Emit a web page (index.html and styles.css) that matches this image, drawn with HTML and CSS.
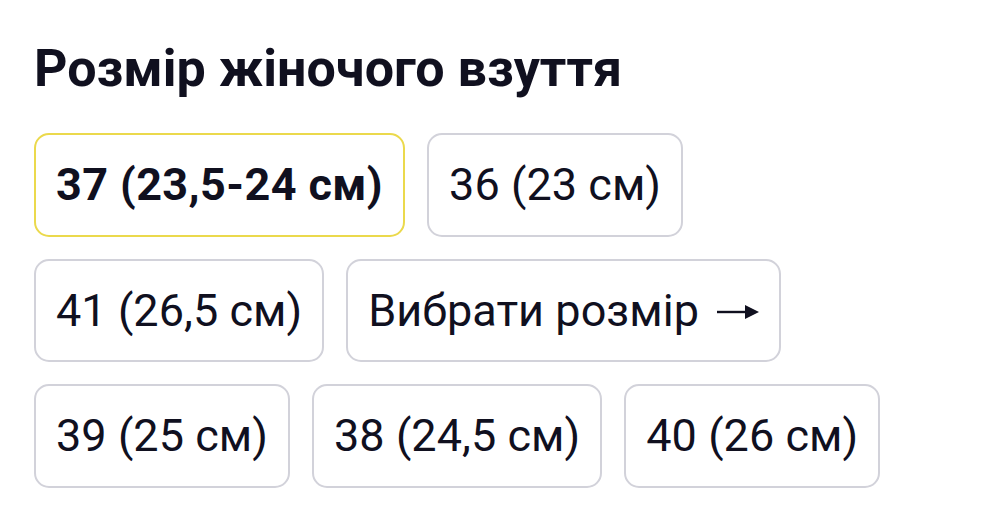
FILE: index.html
```html
<!DOCTYPE html>
<html lang="uk">
<head>
  <meta charset="UTF-8">
  <meta name="viewport" content="width=device-width, initial-scale=1.0">
  <title>Розмір жіночого взуття</title>
  <link rel="stylesheet" href="styles.css">
</head>
<body>
  <div class="size-block">
    <h2 class="size-title">Розмір жіночого взуття</h2>

    <div class="size-list">
      <button class="size-chip selected">37 (23,5-24 см)</button>
      <button class="size-chip">36 (23 см)</button>
      <button class="size-chip">41 (26,5 см)</button>
      <button class="size-chip more">Вибрати розмір
        <svg class="arrow" width="42" height="16" viewBox="0 0 42 16">
          <path d="M0 8H30" stroke="currentColor" stroke-width="2.4"/>
          <path d="M28 1L42 8L28 15Z" fill="currentColor"/>
        </svg>
      </button>
      <button class="size-chip">39 (25 см)</button>
      <button class="size-chip">38 (24,5 см)</button>
      <button class="size-chip">40 (26 см)</button>
    </div>
  </div>
</body>
</html>
```

FILE: styles.css
```css
body {
  margin: 0;
  font-family: Roboto, "Noto Sans", Arial, sans-serif;
  background-color: #fff;
  color: #10101f;
}
.size-block {
  padding: 34px 34px;
}
.size-title {
  margin: 0 0 30px;
  font-size: 52px;
  font-weight: bold;
  line-height: 69px;
}
.size-list {
  display: flex;
  flex-wrap: wrap;
  gap: 22px;
  max-width: 880px;
}
.size-chip {
  font-family: inherit;
  font-size: 45px;
  letter-spacing: 0.05px;
  line-height: 51.5px;
  color: #10101f;
  background: white;
  padding: 24px 20px;
  border: 2px solid #d2d2da;
  border-radius: 15px;
}
.size-chip.selected {
  font-weight: bold;
  letter-spacing: 0.4px;
  border-color: #ebd94c;
}
.size-chip.more {
  display: flex;
  align-items: center;
  gap: 18px;
}
.arrow {
  margin-top: 4px;
}
```
